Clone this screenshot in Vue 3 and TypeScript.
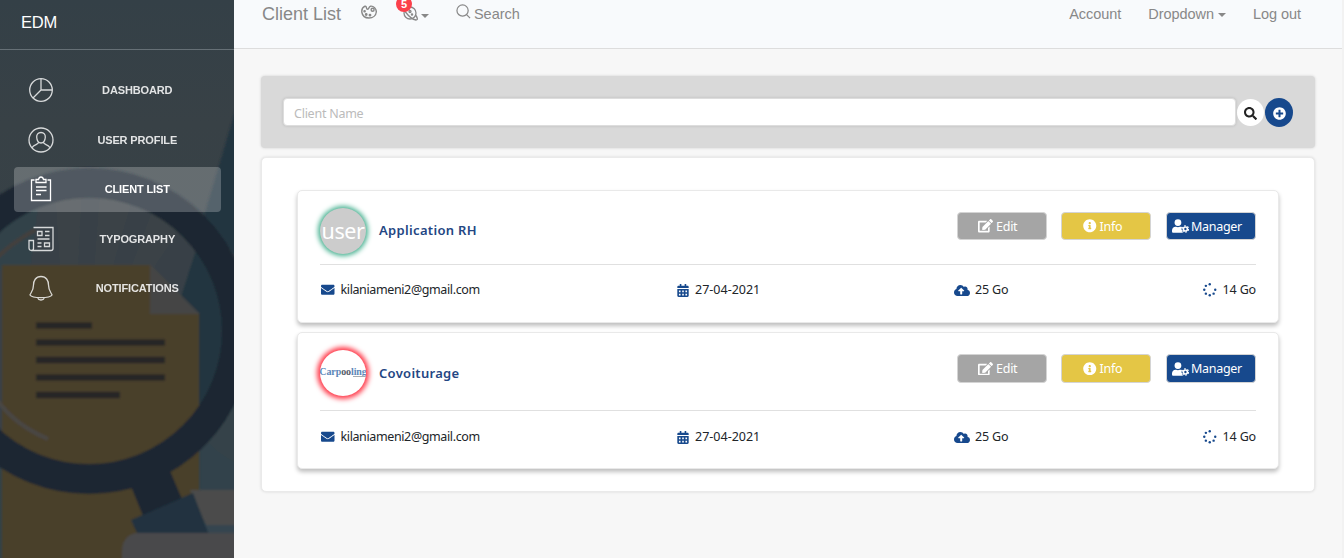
<script setup lang="ts">
interface NavItem { label: string; icon: string; active?: boolean }
interface Client { name: string; avatar: 'user' | 'logo'; email: string; date: string; quota: string; used: string }

const nav: NavItem[] = [
  { label: 'Dashboard', icon: 'pie' },
  { label: 'User Profile', icon: 'user' },
  { label: 'Client List', icon: 'note', active: true },
  { label: 'Typography', icon: 'news' },
  { label: 'Notifications', icon: 'bell' },
]

const clients: Client[] = [
  { name: 'Application RH', avatar: 'user', email: 'kilaniameni2@gmail.com', date: '27-04-2021', quota: '25 Go', used: '14 Go' },
  { name: 'Covoiturage', avatar: 'logo', email: 'kilaniameni2@gmail.com', date: '27-04-2021', quota: '25 Go', used: '14 Go' },
]

const glyphs = {
  search: 'M505 442.7L405.3 343c-4.5-4.5-10.6-7-17-7H372c27.6-35.3 44-79.7 44-128C416 93.1 322.9 0 208 0S0 93.1 0 208s93.1 208 208 208c48.3 0 92.7-16.4 128-44v16.3c0 6.4 2.5 12.5 7 17l99.7 99.7c9.4 9.4 24.6 9.4 33.9 0l28.3-28.3c9.4-9.4 9.4-24.6.1-34zM208 336c-70.7 0-128-57.2-128-128 0-70.7 57.2-128 128-128 70.7 0 128 57.2 128 128 0 70.7-57.2 128-128 128z',
  plus: 'M256 8C119 8 8 119 8 256s111 248 248 248 248-111 248-248S393 8 256 8zm144 276c0 6.6-5.4 12-12 12h-92v92c0 6.6-5.4 12-12 12h-56c-6.6 0-12-5.4-12-12v-92h-92c-6.6 0-12-5.4-12-12v-56c0-6.6 5.4-12 12-12h92v-92c0-6.6 5.4-12 12-12h56c6.6 0 12 5.4 12 12v92h92c6.6 0 12 5.4 12 12v56z',
  edit: 'M402.6 83.2l90.2 90.2c3.8 3.8 3.8 10 0 13.8L274.4 405.6l-92.8 10.3c-12.4 1.4-22.9-9.1-21.5-21.5l10.3-92.8L388.8 83.2c3.8-3.8 10-3.8 13.8 0zm162-22.9l-48.8-48.8c-15.2-15.2-39.9-15.2-55.2 0l-35.4 35.4c-3.8 3.8-3.8 10 0 13.8l90.2 90.2c3.8 3.8 10 3.8 13.8 0l35.4-35.4c15.2-15.3 15.2-40 0-55.2zM384 346.2V448H64V128h229.8c3.2 0 6.2-1.3 8.5-3.5l40-40c7.6-7.6 2.2-20.5-8.5-20.5H48C21.5 64 0 85.5 0 112v352c0 26.5 21.5 48 48 48h352c26.5 0 48-21.5 48-48V306.2c0-10.7-12.9-16-20.5-8.5l-40 40c-2.2 2.3-3.5 5.3-3.5 8.5z',
  info: 'M256 8C119 8 8 119 8 256s111 248 248 248 248-111 248-248S393 8 256 8zm0 110c23.2 0 42 18.8 42 42s-18.8 42-42 42-42-18.8-42-42 18.8-42 42-42zm56 254c0 6.6-5.4 12-12 12h-88c-6.6 0-12-5.4-12-12v-24c0-6.6 5.4-12 12-12h12v-64h-12c-6.6 0-12-5.4-12-12v-24c0-6.6 5.4-12 12-12h64c6.6 0 12 5.4 12 12v100h12c6.6 0 12 5.4 12 12v24z',
  mail: 'M502.3 190.8c3.9-3.1 9.7-.2 9.7 4.7V400c0 26.5-21.5 48-48 48H48c-26.5 0-48-21.5-48-48V195.6c0-5 5.7-7.8 9.7-4.7 22.4 17.4 52.1 39.5 154.1 113.6 21.1 15.4 56.7 47.8 92.2 47.6 35.7.3 72-32.8 92.3-47.6 102-74.1 131.6-96.3 154-113.7zM256 320c23.2.4 56.6-29.2 73.4-41.4 132.7-96.3 142.8-104.7 173.4-128.7 5.8-4.5 9.2-11.5 9.2-18.9v-19c0-26.5-21.5-48-48-48H48c-26.5 0-48 21.5-48 48v19c0 7.4 3.4 14.3 9.2 18.9 30.6 23.9 40.7 32.4 173.4 128.7 16.8 12.2 50.2 41.8 73.4 41.4z',
  calendar: 'M448 112v48H0v-48c0-26.5 21.5-48 48-48h48V12c0-6.6 5.4-12 12-12h40c6.6 0 12 5.4 12 12v52h128V12c0-6.6 5.4-12 12-12h40c6.6 0 12 5.4 12 12v52h48c26.5 0 48 21.5 48 48zM0 192h448v272c0 26.5-21.5 48-48 48H48c-26.5 0-48-21.5-48-48zM64 256v64h64v-64zM192 256v64h64v-64zM320 256v64h64v-64zM64 384v64h64v-64zM192 384v64h64v-64zM320 384v64h64v-64z',
  cloud: 'M537.6 226.6c4.1-10.7 6.4-22.4 6.4-34.6 0-53-43-96-96-96-19.7 0-38.1 6-53.3 16.2C367 64.2 315.3 32 256 32c-88.4 0-160 71.6-160 160 0 2.7.1 5.4.2 8.1C40.2 219.8 0 273.2 0 336c0 79.5 64.5 144 144 144h368c70.7 0 128-57.3 128-128 0-61.9-44-113.6-102.4-125.4zM393.4 288H328v112c0 8.8-7.2 16-16 16h-48c-8.8 0-16-7.2-16-16V288h-65.4c-14.3 0-21.4-17.2-11.3-27.3l105.4-105.4c6.2-6.2 16.4-6.2 22.6 0l105.4 105.4c10.1 10.1 2.9 27.3-11.3 27.3z',
}
const spinnerDots = [[256, 48], [464, 256], [403, 403], [256, 464], [109, 403], [48, 256], [109, 109]]
</script>

<template>
  <div class="page">
    <aside class="sidebar">
      <svg class="art" viewBox="0 0 234 558" preserveAspectRatio="none">
        <defs>
          <linearGradient id="sky" x1="0" y1="0" x2="0" y2="1">
            <stop offset="0" stop-color="#344047" /><stop offset=".22" stop-color="#384146" /><stop offset="1" stop-color="#34434a" />
          </linearGradient>
          <clipPath id="lens"><circle cx="89" cy="331" r="134" /></clipPath>
          <filter id="soft"><feGaussianBlur stdDeviation="1" /></filter>
        </defs>
        <rect width="234" height="558" fill="url(#sky)" />
        <g filter="url(#soft)">
          <path d="M240 95 203 220 240 260Z" fill="#22343f" />
          <g clip-path="url(#lens)">
            <rect x="-10" y="190" width="250" height="290" fill="#374146" />
            <path d="M-10 190H40L30 270H-10Z" fill="#33424a" />
            <path d="M55 190 60 270H78L82 190ZM100 190 94 270H112L135 190ZM160 190 130 270H152L190 215Z" fill="#3b4346" />
            <path d="M197 247 180 300 199 314V480H240V220Z" fill="#22353f" />
          </g>
          <path d="M200 405 240 370V500H200Z" fill="#34434a" />
          <path d="M200 430Q210 450 234 462V500H200Z" fill="#33424c" />
          <path d="M2 265H150L199 314V570H2Z" fill="#4a3f2a" />
          <path d="M150 264 200 314H150Z" fill="#454444" />
          <g stroke="#282728" stroke-width="6.5">
            <path d="M36 325.500H92M36 342.500H165M36 360H165M36 377.500H165M36 395H120" />
          </g>
          <path d="M-3 258Q10 244 35 230" fill="none" stroke="#443f3d" stroke-width="4" />
          <path d="M-3 400Q15 425 48 439" fill="none" stroke="#4a4644" stroke-width="4" />
          <circle cx="89" cy="331" r="148" fill="none" stroke="#1c2731" stroke-width="30" />
          <path d="M130 484 168 466 182 499 143 516Z" fill="#1c2731" />
          <path d="M200 523H240V536H200Z" fill="#344450" />
          <path d="M190 490H240V525H206Z" fill="#4b4b4c" />
          <path d="M131 520 193 493 209 535H138Z" fill="#20333f" />
          <path d="M240 533H136Q122 536 122 552V565H240Z" fill="#4a4a4b" />
        </g>
      </svg>
      <div class="brand">EDM</div>
      <nav class="nav">
        <a v-for="item in nav" :key="item.label" class="nav-item" :class="{ active: item.active }">
          <svg class="nav-icon" viewBox="0 0 28 28">
            <template v-if="item.icon === 'pie'">
              <circle cx="14" cy="14" r="11.3" /><path d="M14 2.700V14H25.300M14 14 6 22" />
            </template>
            <template v-else-if="item.icon === 'user'">
              <circle cx="14" cy="14" r="12" />
              <path d="M14 6.500c-3 0-4.500 2-4.300 4.800.2 3 1.500 5.700 4.300 5.700s4.100-2.700 4.300-5.700c.2-2.800-1.300-4.800-4.300-4.800zM11.500 16.300c0 2.500-4.500 2-6.500 5.500M16.500 16.300c0 2.500 4.500 2 6.500 5.500" />
            </template>
            <template v-else-if="item.icon === 'note'">
              <path d="M7.500 5H4.500V25.500H23.500V5H20.500M9 7.500V4.500H11.500Q12 2 14 2T16.500 4.500H19V7.500ZM9 12H19.500M9 15.500H19.500M9 19.500H14" />
            </template>
            <template v-else-if="item.icon === 'news'">
              <path d="M6.500 2.500H26V23.500Q26 25.500 24 25.500H4.500Q2 25.500 2 23V15.500H6.500V23.500Q6.500 25.500 4.500 25.500M10.500 6.500H15V10.500H10.500ZM18 6.500H22.500M18 10.500H22.500M10.500 14H22.500M10.500 18H14.500M10.500 21.500H14.500M17.500 18H22.500V21.500H17.500Z" />
            </template>
            <template v-else>
              <path d="M14 2.500C8.500 2.500 6.500 7 6.500 11 6.500 17 3.500 19 3 21 4.500 23.500 10 23.700 14 23.700S23.500 23.500 25 21C24.500 19 21.500 17 21.500 11 21.500 7 19.500 2.500 14 2.500ZM10.500 23.700Q11.500 26 14 26T17.500 23.700" />
            </template>
          </svg>
          <span class="nav-label">{{ item.label }}</span>
        </a>
      </nav>
    </aside>

    <div class="main">
      <header class="topbar">
        <span class="title">Client List</span>
        <svg class="palette" viewBox="0 0 16 16">
          <path d="M4 2.200C1.500 3.500.4 5.800.9 8.500 1.500 12 4.500 14 8 14c4 0 7-2.500 7.300-6C15.500 4.500 12.500 1.800 9.500 2.200 7.500 2.500 8.500 5.300 6.500 5.300 4.800 5.300 6 1.700 4 2.200Z" />
          <circle cx="11.600" cy="5.800" r="1.500" /><circle cx="3.600" cy="7.300" r=".6" /><circle cx="5.200" cy="10.500" r=".7" /><circle cx="9" cy="11.200" r=".7" />
        </svg>
        <span class="notify">
          <svg class="planet" viewBox="0 0 16 16">
            <circle cx="8" cy="8" r="6" /><path d="M3 3C1 .5.500 3 3.500 7 6.500 11 11 14.500 14 15 16.500 15 15 12 13.500 10" /><circle cx="8" cy="6.500" r="1" /><circle cx="10" cy="9.500" r=".6" />
          </svg>
          <i class="caret"></i>
          <b class="badge">5</b>
        </span>
        <svg class="lookup" viewBox="0 0 16 16"><circle cx="7" cy="7" r="6" /><path d="M11.300 11.300 15 15" /></svg>
        <span class="search-text">Search</span>
        <span class="links">
          <a>Account</a><a>Dropdown<i class="caret"></i></a><a>Log out</a>
        </span>
      </header>

      <main class="content">
        <section class="filter">
          <input class="field" type="text" placeholder="Client Name" />
          <button class="round white"><svg viewBox="0 0 512 512"><path :d="glyphs.search" /></svg></button>
          <button class="round blue"><svg viewBox="0 0 512 512"><path :d="glyphs.plus" /></svg></button>
        </section>

        <section class="list">
          <article v-for="client in clients" :key="client.name" class="card" :class="client.avatar">
            <div class="head">
              <div class="avatar">
                <span v-if="client.avatar === 'user'" class="avatar-text">user</span>
                <span v-else class="wordmark"><span>Carp<b>oo</b>ling</span><i></i></span>
              </div>
              <h4 class="name">{{ client.name }}</h4>
              <div class="actions">
                <button class="btn gray"><svg class="w15" viewBox="0 0 576 512"><path :d="glyphs.edit" /></svg><span>Edit</span></button>
                <button class="btn gold"><svg class="w13" viewBox="0 0 512 512"><path :d="glyphs.info" /></svg><span>Info</span></button>
                <button class="btn navy">
                  <svg class="w17" viewBox="0 0 640 512">
                    <path d="M224 256a128 128 0 1 0 0-256 128 128 0 0 0 0 256ZM314 288h-17q-73 32-146 0h-17C60 288 0 348 0 422v42c0 26 21 48 48 48h352c10 0 20-3 27-8-50-25-66-40-45-82-33-30-33-88 0-121-20-8-40-13-68-13Z" />
                    <circle cx="505" cy="370" r="75" class="gear" /><circle cx="505" cy="370" r="122" class="teeth" />
                  </svg><span>Manager</span>
                </button>
              </div>
            </div>
            <div class="stats">
              <span class="mail"><svg class="w13" viewBox="0 0 512 512"><path :d="glyphs.mail" /></svg>{{ client.email }}</span>
              <span class="date"><svg class="w12" viewBox="0 0 448 512"><path fill-rule="evenodd" :d="glyphs.calendar" /></svg>{{ client.date }}</span>
              <span class="quota"><svg class="w16" viewBox="0 0 640 512"><path :d="glyphs.cloud" /></svg>{{ client.quota }}</span>
              <span class="used"><svg class="w13" viewBox="0 0 512 512"><circle v-for="(d, i) in spinnerDots" :key="i" :cx="d[0]" :cy="d[1]" r="46" /></svg>{{ client.used }}</span>
            </div>
          </article>
        </section>
      </main>
    </div>
  </div>
</template>

<style>
body { background: #f7f7f7; overflow: hidden; }
</style>

<style scoped>
* { box-sizing: border-box; }
.page { display: flex; width: 1344px; height: 558px; overflow: hidden; background: #f7f7f7; font-family: "Noto Sans", "Open Sans", sans-serif; }
.sidebar { position: relative; width: 234px; flex: none; height: 558px; overflow: hidden; font-family: "Liberation Sans", Arial, sans-serif; }
.art { position: absolute; inset: 0; width: 234px; height: 558px; }
.brand { position: relative; height: 50px; padding: 12px 21px; border-bottom: 1px solid #667076; color: #fff; font-size: 16.5px; line-height: 21px; letter-spacing: -.2px; }
.nav { position: relative; display: flex; flex-direction: column; gap: 5px; padding: 18px 13px 0 14px; }
.nav-item { display: flex; align-items: center; height: 44.5px; padding-left: 12.5px; border-radius: 4px; color: #fff; }
.nav-item.active { background: rgba(255, 255, 255, .23); }
.nav-icon { width: 28px; height: 28px; flex: none; fill: none; stroke: currentColor; stroke-width: 1.3; opacity: .8; }
.nav-label { flex: 1; margin-right: 1px; text-align: center; text-transform: uppercase; font-size: 11px; font-weight: 700; letter-spacing: -.13px; line-height: 20px; opacity: .86; }
.active .nav-icon, .active .nav-label { opacity: 1; }

.main { flex: 1; min-width: 0; border-right: 2px solid #f2f2f2; }
.topbar { display: flex; align-items: flex-start; height: 49px; padding: 0 41px 0 28px; border-bottom: 1px solid #ddd; background: #f8fafc; color: #888; font: 14px/20px "Liberation Sans", Arial, sans-serif; }
.title { width: 80px; margin-top: 3px; font-size: 18px; line-height: 22px; white-space: nowrap; }
.palette { width: 16px; height: 16px; margin: 4px 0 0 19px; fill: none; stroke: #888; stroke-width: 1.4; }
.notify { position: relative; display: flex; align-items: center; margin: 4px 0 0 25px; height: 18px; }
.planet { width: 16px; height: 16px; margin-top: -1px; fill: none; stroke: #888; stroke-width: 1.3; }
.caret { display: inline-block; width: 0; border: 4px solid transparent; border-top: 4px solid #888; border-bottom: 0; vertical-align: 2px; }
.notify .caret { margin: 5px 0 0 3px; }
.badge { position: absolute; left: -6px; top: -8px; width: 16px; height: 16px; border-radius: 8px; background: #fb404b; color: #fff; text-align: center; font-size: 11px; line-height: 16px; }
.lookup { width: 15px; height: 15px; margin: 4px 0 0 27px; fill: none; stroke: #888; stroke-width: 1.3; }
.search-text { margin: 4px 0 0 3px; font-size: 14.5px; letter-spacing: -.05px; }
.links { display: flex; gap: 27px; margin: 4px 0 0 auto; font-size: 14.5px; letter-spacing: -.05px; }
.links .caret { margin-left: 4px; }

.content { padding: 27px 27px 0; }
.filter { display: flex; align-items: center; height: 72px; padding: 0 22px 0 22px; border-radius: 4px; background: #d9d9d9; box-shadow: 0 0 3px rgba(0, 0, 0, .16); }
.field { flex: 1; height: 28px; padding: 2px 9px 0 10px; border: 1px solid #ddd; border-radius: 4px; outline: 0; background: #fff; box-shadow: 0 0 3px rgba(0, 0, 0, .14); font: 12.5px/20px "Noto Sans", sans-serif; letter-spacing: -.25px; }
.field::placeholder { color: #bbb; opacity: 1; }
.round { display: flex; align-items: center; justify-content: center; margin-top: 1px; padding: 0; border: 0; border-radius: 50%; }
.round svg { width: 13px; height: 13px; margin-top: 1px; }
.round.white { width: 27px; height: 27px; margin-left: 1px; background: #fff; fill: #222; }
.round.blue { width: 28px; height: 29px; margin-left: 1px; background: #17498d; fill: #fff; }
.list { display: flex; flex-direction: column; gap: 9px; height: 335px; margin-top: 9px; padding: 32px 35px 0 35px; border: 1px solid #eaeaea; border-radius: 5px; background: #fff; box-shadow: 0 0 3px rgba(0, 0, 0, .12); }
.card { height: 133px; padding: 0 22px; border: 1px solid #e9e9e9; border-radius: 5px; background: #fff; box-shadow: 0 3px 4px rgba(0, 0, 0, .25); }
.card.logo { height: 137px; }
.head { display: flex; align-items: flex-start; height: 74px; border-bottom: 1px solid #e0e0e0; }
.logo .head { height: 78px; }
.avatar { display: flex; align-items: center; justify-content: center; width: 46px; height: 46px; margin-top: 17px; overflow: hidden; border-radius: 50%; background: #ccc; box-shadow: 0 0 5px 2px #44b08f; }
.logo .avatar { background: #fff; box-shadow: 0 0 5px 3px #ff3b4b; }
.avatar-text { color: #fff; font-size: 21.5px; line-height: 26px; letter-spacing: -.4px; }
.wordmark { display: flex; flex-direction: column; align-items: flex-end; margin-top: -2px; color: #5c86b8; font: bold 10px/9px "Liberation Serif", serif; letter-spacing: -.1px; }
.wordmark b { color: #555d68; }
.wordmark i { width: 12px; height: 1px; margin-right: 2px; background: #a5abb2; }
.name { margin: 29px 0 0 13px; color: #234683; font-size: 13px; font-weight: 600; line-height: 20px; letter-spacing: .33px; white-space: nowrap; }
.logo .name { margin-top: 30px; letter-spacing: .3px; }
.actions { display: flex; margin: 21px 0 0 auto; }
.btn { display: flex; align-items: center; width: 90px; height: 28px; margin-left: 14px; padding: 0 0 0 20px; border: 1px solid #d4d4d4; border-radius: 4px; color: #fff; fill: #fff; font: 12.5px/18px "Noto Sans", sans-serif; letter-spacing: -.25px; }
.logo .btn { height: 29px; }
.btn span { margin-left: 3px; padding-top: 1px; }
.gray { background: #a5a5a5; }
.gold { padding-left: 21px; background: #e4c645; }
.navy { margin-left: 15px; padding-left: 5px; background: #17498d; }
.navy span { margin-left: 2px; letter-spacing: -.3px; }
.gear { fill: none; stroke: #fff; stroke-width: 62; }
.teeth { fill: none; stroke: #fff; stroke-width: 40; stroke-dasharray: 64 63.7; }
.w12 { width: 12px; height: 13px; }
.w13 { width: 13.5px; height: 13.5px; }
.w15 { width: 15px; height: 13.5px; }
.w16 { width: 16px; height: 13px; }
.w17 { width: 17px; height: 14px; }
.stats { display: grid; grid-template-columns: 356px 278px 1fr auto; margin-top: 15px; color: #212529; font-size: 12.5px; line-height: 20px; letter-spacing: -.12px; }
.logo .stats { margin-top: 16px; }
.stats span { display: flex; align-items: center; white-space: nowrap; }
.stats svg { flex: none; margin: 0 5px 0 0; fill: #17498d; }
.stats .mail { letter-spacing: -.38px; }
.stats .mail svg { margin-left: 1px; margin-right: 6px; }
.stats .date { letter-spacing: 0; }
.stats .date svg { margin-left: 1px; margin-right: 6px; }
.stats .quota, .stats .used { letter-spacing: -.15px; }
.stats .quota svg { margin-right: 5px; }
.stats .used svg { margin-right: 6px; }
</style>
